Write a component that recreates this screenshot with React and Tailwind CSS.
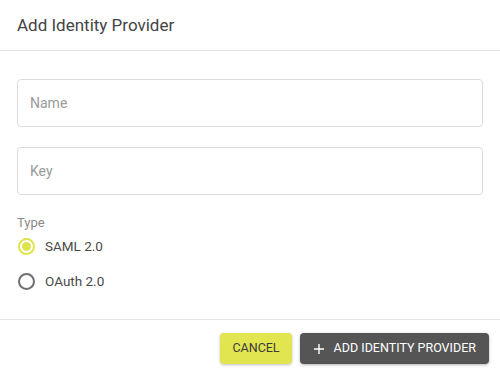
import React, { useState } from "react";

function Radio({ checked, label, onClick }) {
  return (
    <label className="flex items-center gap-[10px] h-[20px] cursor-pointer" onClick={onClick}>
      <span className="flex items-center justify-center w-[17px] h-[17px]">
        {checked ? (
          <span className="w-[17px] h-[17px] rounded-full border-2 border-[#dfe34b] flex items-center justify-center">
            <span className="w-[9px] h-[9px] rounded-full bg-[#dfe34b]" />
          </span>
        ) : (
          <span className="w-[17px] h-[17px] rounded-full border-2 border-[#6f6f6f]" />
        )}
      </span>
      <span className="text-[13.5px] text-[#4a4a4a] leading-[20px]">{label}</span>
    </label>
  );
}

export default function App() {
  const [type, setType] = useState("saml");
  return (
    <div className="w-[500px] h-[376px] bg-white flex flex-col" style={{ fontFamily: "Roboto, 'Liberation Sans', sans-serif" }}>
      <div className="h-[51px] flex items-center px-[17px] border-b border-[#e4e4e4]">
        <h1 className="text-[17px] text-[#444] leading-none">Add Identity Provider</h1>
      </div>
      <div className="flex-1 flex flex-col px-[17px] pt-[28px]">
        <input
          placeholder="Name"
          className="h-[48px] w-full border border-[#dcdcdc] rounded-[4px] px-[12px] text-[14px] text-[#444] placeholder:text-[#9a9a9a] outline-none"
        />
        <input
          placeholder="Key"
          className="mt-[20px] h-[48px] w-full border border-[#dcdcdc] rounded-[4px] px-[12px] text-[14px] text-[#444] placeholder:text-[#9a9a9a] outline-none"
        />
        <div className="mt-[20px] text-[13px] text-[#8a8a8a] leading-[16px]">Type</div>
        <div className="mt-[5px] flex flex-col gap-[15px] pl-[1px]">
          <Radio checked={type === "saml"} label="SAML 2.0" onClick={() => setType("saml")} />
          <Radio checked={type === "oauth"} label="OAuth 2.0" onClick={() => setType("oauth")} />
        </div>
      </div>
      <div className="h-[57px] border-t border-[#e4e4e4] flex items-start justify-end gap-[8px] pt-[13px] pr-[11px]">
        <button className="h-[31px] px-[12px] rounded-[4px] bg-[#e1e650] text-[#3a3a3a] text-[12.5px] uppercase shadow-[0_1px_3px_rgba(0,0,0,0.25)]">
          Cancel
        </button>
        <button className="h-[31px] pl-[14px] pr-[13px] rounded-[4px] bg-[#555555] text-white text-[12.5px] uppercase flex items-center gap-[10px] shadow-[0_1px_3px_rgba(0,0,0,0.3)]">
          <svg width="10" height="10" viewBox="0 0 10 10" fill="none" stroke="white" strokeWidth="1.4">
            <path d="M5 0v10M0 5h10" />
          </svg>
          Add Identity Provider
        </button>
      </div>
    </div>
  );
}
